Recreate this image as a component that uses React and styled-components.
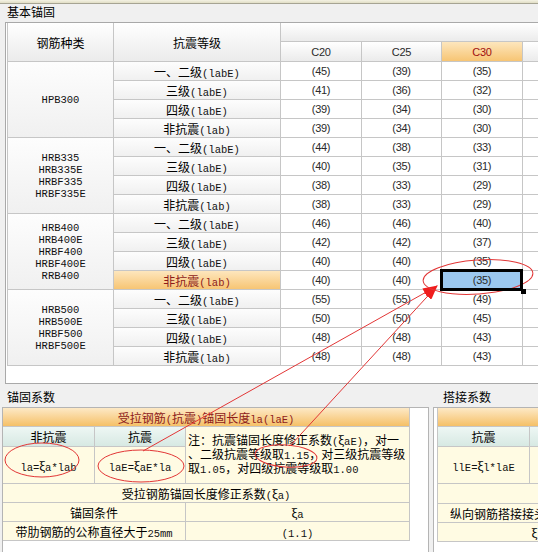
import styled, { createGlobalStyle } from "styled-components";

const GlobalStyle = createGlobalStyle`
  html, body { margin: 0; padding: 0; }
  body {
    background: #f0f0f0;
    font-family: "Noto Sans CJK SC", "Liberation Sans", sans-serif;
    font-size: 12px;
    color: #000;
  }
`;

const tones = {
  plain: "#ffffff",
  head: "linear-gradient(#ffffff, #ebebeb)",
  side: "linear-gradient(#fdfdfd, #f0f0f0)",
  hot: "linear-gradient(#fde6bd, #f7c574)",
  orange: "linear-gradient(#fde9c6, #f5c067)",
  teal: "linear-gradient(#eef7f4, #d7e9e3)",
  cream: "#fffbe3",
};

const Page = styled.div`
  position: relative;
  width: 538px;
  height: 552px;
  overflow: hidden;
  background: #f0f0f0;
`;

const TopStrip = styled.div`
  height: 3px;
  background: linear-gradient(#f4f2e3, #e1dec6);
  border-bottom: 1px solid #a6a493;
`;

const GroupTitle = styled.div`
  height: 18px;
  padding-left: 7px;
  line-height: 15px;
`;

const GroupBox = styled.div`
  margin-left: 5px;
  height: 360px;
  padding-left: 1px;
  background: #fff;
  border-top: 1px solid #a9a9a9;
  border-left: 1px solid #a9a9a9;
  border-bottom: 1px solid #a9a9a9;
`;

const Grid = styled.table`
  border-collapse: separate;
  border-spacing: 0;
  table-layout: fixed;
  width: ${(p) => p.$w}px;
  border-left: ${(p) => (p.$edge ? "1px solid #c6c6c6" : "none")};
`;

const Row = styled.tr`
  height: ${(p) => p.$h || 19}px;
`;

const Cell = styled.td`
  padding: 0;
  border-right: 1px solid #c6c6c6;
  border-bottom: 1px solid #c6c6c6;
  background: ${(p) => tones[p.$tone || "plain"]};
  color: ${(p) => (p.$hot ? "#8e1b1b" : "#000")};
  text-align: ${(p) => p.$align || "center"};
  vertical-align: middle;
  white-space: nowrap;
  overflow: hidden;
`;

const Num = styled(Cell)`
  font-family: "Liberation Sans", sans-serif;
  font-size: 11px;
  letter-spacing: -0.3px;
  color: ${(p) => (p.$hot ? "#a01010" : "#2a2a2a")};
`;

const Picked = styled(Num)`
  position: relative;
  overflow: visible;
  background: #9cc8ef;

  &::before {
    content: "";
    position: absolute;
    left: -2px;
    top: -2px;
    right: -1px;
    bottom: -2px;
    border: 3px solid #000;
    z-index: 1;
  }

  &::after {
    content: "";
    position: absolute;
    right: -4px;
    bottom: -5px;
    width: 5px;
    height: 5px;
    background: #000;
    z-index: 2;
  }
`;

const Note = styled(Cell)`
  white-space: normal;
  line-height: 12px;
  padding-left: 2px;
`;

const Lat = styled.span`
  font-family: "Liberation Mono", monospace;
  font-size: 10.5px;
  color: #111;
`;

const NameStack = styled.div`
  font-family: "Liberation Mono", monospace;
  font-size: 10.5px;
  line-height: 12px;
  color: #111;
`;

const Bottom = styled.div`
  display: flex;
  gap: 4px;
  padding-left: 2px;
`;

const Panel = styled.section`
  width: ${(p) => p.$w}px;
  flex-shrink: 0;
`;

const PanelTitle = styled.div`
  height: 20px;
  padding-top: 3px;
  padding-left: ${(p) => p.$indent}px;
  line-height: 20px;
`;

const PanelBox = styled.div`
  height: 200px;
  padding-left: ${(p) => p.$pad || 0}px;
  background: #fff;
  border-top: 1px solid #b4b4b4;
  border-left: 1px solid #b4b4b4;
  border-right: ${(p) => (p.$closed ? "1px solid #b4b4b4" : "none")};
`;

const Marks = styled.svg`
  position: absolute;
  left: 0;
  top: 0;
  pointer-events: none;
`;

const groups = [
  {
    names: ["HPB300"],
    rows: [[45, 39, 35], [41, 36, 32], [39, 34, 30], [39, 34, 30]],
  },
  {
    names: ["HRB335", "HRB335E", "HRBF335", "HRBF335E"],
    rows: [[44, 38, 33], [40, 35, 31], [38, 33, 29], [38, 33, 29]],
  },
  {
    names: ["HRB400", "HRB400E", "HRBF400", "HRBF400E", "RRB400"],
    rows: [[46, 46, 40], [42, 42, 37], [40, 40, 35], [40, 40, 35]],
    hot: 3,
  },
  {
    names: ["HRB500", "HRB500E", "HRBF500", "HRBF500E"],
    rows: [[55, 55, 49], [50, 50, 45], [48, 48, 43], [48, 48, 43]],
  },
];

const grades = [
  ["一、二级", "(labE)"],
  ["三级", "(labE)"],
  ["四级", "(labE)"],
  ["非抗震", "(lab)"],
];

function AnchorTable() {
  return (
    <Grid $w={596} $edge>
      <colgroup>
        <col style={{ width: 106 }} />
        <col style={{ width: 167 }} />
        <col style={{ width: 81 }} />
        <col style={{ width: 80 }} />
        <col style={{ width: 81 }} />
        <col style={{ width: 80 }} />
      </colgroup>
      <tbody>
        <Row $h={19}>
          <Cell $tone="head" rowSpan={2}>钢筋种类</Cell>
          <Cell $tone="head" rowSpan={2}>抗震等级</Cell>
          <Cell $tone="head" colSpan={4} />
        </Row>
        <Row $h={20}>
          <Num $tone="head">C20</Num>
          <Num $tone="head">C25</Num>
          <Num $tone="hot" $hot>C30</Num>
          <Cell $tone="head" />
        </Row>
        {groups.map((g) =>
          g.rows.map((vals, i) => {
            const hot = g.hot === i;
            return (
              <Row key={g.names[0] + i}>
                {i === 0 && (
                  <Cell $tone="side" rowSpan={4}>
                    <NameStack>
                      {g.names.map((n) => (
                        <div key={n}>{n}</div>
                      ))}
                    </NameStack>
                  </Cell>
                )}
                <Cell $tone={hot ? "hot" : "side"} $hot={hot}>
                  {grades[i][0]}
                  <Lat style={hot ? { color: "#8e1b1b" } : undefined}>{grades[i][1]}</Lat>
                </Cell>
                <Num>({vals[0]})</Num>
                <Num>({vals[1]})</Num>
                {hot ? <Picked>({vals[2]})</Picked> : <Num>({vals[2]})</Num>}
                <Cell />
              </Row>
            );
          })
        )}
      </tbody>
    </Grid>
  );
}

function AnchorFactors() {
  return (
    <Grid $w={407}>
      <colgroup>
        <col style={{ width: 92 }} />
        <col style={{ width: 91 }} />
        <col style={{ width: 224 }} />
      </colgroup>
      <tbody>
        <Row $h={19}>
          <Cell $tone="orange" $hot colSpan={3}>
            受拉钢筋<Lat style={{ color: "#8e1b1b" }}>(</Lat>抗震
            <Lat style={{ color: "#8e1b1b" }}>)</Lat>锚固长度
            <Lat style={{ color: "#8e1b1b" }}>la(laE)</Lat>
          </Cell>
        </Row>
        <Row $h={20}>
          <Cell $tone="teal">非抗震</Cell>
          <Cell $tone="teal">抗震</Cell>
          <Note $tone="cream" $align="left" rowSpan={2}>
            注：抗震锚固长度修正系数<Lat>(</Lat>ξ<Lat>aE)</Lat>，对一
            <br />
            、二级抗震等级取<Lat>1.15</Lat>，对三级抗震等级
            <br />
            取<Lat>1.05</Lat>，对四级抗震等级取<Lat>1.00</Lat>
          </Note>
        </Row>
        <Row $h={37}>
          <Cell $tone="cream">
            <Lat>la=</Lat>ξ<Lat>a*lab</Lat>
          </Cell>
          <Cell $tone="cream">
            <Lat>laE=</Lat>ξ<Lat>aE*la</Lat>
          </Cell>
        </Row>
        <Row>
          <Cell $tone="cream" colSpan={3}>
            受拉钢筋锚固长度修正系数<Lat>(</Lat>ξ<Lat>a)</Lat>
          </Cell>
        </Row>
        <Row>
          <Cell $tone="cream" colSpan={2}>锚固条件</Cell>
          <Cell $tone="cream">
            ξ<Lat>a</Lat>
          </Cell>
        </Row>
        <Row>
          <Cell $tone="cream" colSpan={2}>
            带肋钢筋的公称直径大于<Lat>25mm</Lat>
          </Cell>
          <Cell $tone="cream">
            <Lat>(1.1)</Lat>
          </Cell>
        </Row>
      </tbody>
    </Grid>
  );
}

function LapFactors() {
  return (
    <Grid $w={450} $edge>
      <colgroup>
        <col style={{ width: 92 }} />
        <col style={{ width: 108 }} />
        <col style={{ width: 249 }} />
      </colgroup>
      <tbody>
        <Row $h={19}>
          <Cell $tone="orange" colSpan={3} />
        </Row>
        <Row $h={20}>
          <Cell $tone="teal">抗震</Cell>
          <Cell $tone="teal" />
          <Cell $tone="cream" rowSpan={2} />
        </Row>
        <Row $h={37}>
          <Cell $tone="cream">
            <Lat>llE=</Lat>ξ<Lat>l*laE</Lat>
          </Cell>
          <Cell $tone="cream" />
        </Row>
        <Row $h={20}>
          <Cell $tone="cream" colSpan={3} />
        </Row>
        <Row>
          <Cell $tone="cream" colSpan={2}>
            纵向钢筋搭接接头面积百分率<Lat>(%)</Lat>
          </Cell>
          <Cell $tone="cream" />
        </Row>
        <Row>
          <Cell $tone="cream" colSpan={2}>
            ξ<Lat>l</Lat>
          </Cell>
          <Cell $tone="cream" />
        </Row>
      </tbody>
    </Grid>
  );
}

export default function App() {
  return (
    <Page>
      <GlobalStyle />
      <TopStrip />
      <GroupTitle>基本锚固</GroupTitle>
      <GroupBox>
        <AnchorTable />
      </GroupBox>
      <Bottom>
        <Panel $w={427}>
          <PanelTitle $indent={5}>锚固系数</PanelTitle>
          <PanelBox $closed>
            <AnchorFactors />
          </PanelBox>
        </Panel>
        <Panel $w={200}>
          <PanelTitle $indent={10}>搭接系数</PanelTitle>
          <PanelBox $pad={3}>
            <LapFactors />
          </PanelBox>
        </Panel>
      </Bottom>
      <Marks width="538" height="552" viewBox="0 0 538 552">
        <defs>
          <marker
            id="tip"
            markerWidth="15"
            markerHeight="10"
            refX="14"
            refY="5"
            orient="auto"
            markerUnits="userSpaceOnUse"
          >
            <path d="M0,0 L15,5 L0,10 z" fill="#f01c1c" />
          </marker>
        </defs>
        <g fill="none" stroke="#e23636" strokeWidth="1">
          <line x1="143" y1="451" x2="437" y2="286" markerEnd="url(#tip)" />
          <line x1="290" y1="446" x2="437" y2="286" markerEnd="url(#tip)" />
          <ellipse cx="42" cy="460" rx="37" ry="17" />
          <ellipse cx="141" cy="466" rx="43" ry="16" />
          <ellipse cx="286" cy="456" rx="31" ry="11" transform="rotate(4 286 456)" />
          <ellipse cx="478" cy="277" rx="55" ry="17" transform="rotate(-4 478 277)" />
        </g>
      </Marks>
    </Page>
  );
}
